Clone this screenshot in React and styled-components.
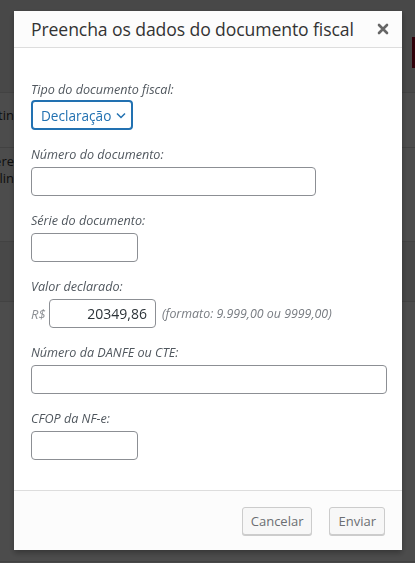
import React from 'react';
import styled, { createGlobalStyle } from 'styled-components';

const GlobalStyle = createGlobalStyle`
  html, body {
    margin: 0;
    padding: 0;
    width: 415px;
    height: 563px;
    overflow: hidden;
    background: #f1f1f1;
    font-family: "Open Sans", "Liberation Sans", sans-serif;
  }
`;

// the admin page that lies under the dimmed backdrop
const Page = styled.div`
  width: 415px;
  height: 563px;
  background: #f1f1f1;
  display: flex;
  flex-direction: column;
`;

const TopBar = styled.div`
  height: 93px;
  display: flex;
  justify-content: flex-end;
  align-items: flex-start;
  padding-top: 37px;
  box-sizing: border-box;
  border-bottom: 1px solid #dcdcdc;
`;

const RedButton = styled.div`
  width: 3px;
  height: 31px;
  background: #a0001e;
`;

const PageRow = styled.div`
  height: ${p => p.$h}px;
  background: ${p => (p.$white ? '#fff' : '#f1f1f1')};
  border-bottom: 1px solid #dcdcdc;
  box-sizing: border-box;
  padding-top: ${p => p.$pad || 12}px;
`;

// only the sliver left of the dialog shows, so the cell is clipped
const PageCell = styled.div`
  width: 14px;
  overflow: hidden;
  display: flex;
  flex-direction: column;
  align-items: flex-end;
  font-size: 13px;
  line-height: 17px;
  color: #333;
  white-space: nowrap;
`;

const Backdrop = styled.div`
  position: fixed;
  inset: 0;
  background: rgba(0, 0, 0, 0.7);
`;

const Modal = styled.div`
  position: fixed;
  top: 11px;
  left: 14px;
  width: 388px;
  height: 539px;
  background: #fff;
  display: flex;
  flex-direction: column;
  box-shadow: 0 3px 6px rgba(0, 0, 0, 0.3);
`;

const Header = styled.div`
  height: 36px;
  flex: none;
  background: #fcfcfc;
  border-bottom: 1px solid #dddddd;
  display: flex;
  align-items: center;
  justify-content: space-between;
  padding: 0 12px 0 17px;
`;

const Title = styled.h1`
  margin: 0;
  font-size: 17.6px;
  font-weight: 400;
  color: #333;
  letter-spacing: -0.1px;
`;

const Close = styled.button`
  border: 0;
  background: none;
  padding: 0;
  width: 14px;
  height: 14px;
  display: flex;
  align-items: center;
  justify-content: center;
`;

const Body = styled.div`
  flex: 1;
  padding: 32px 17px 0 17px;
  display: flex;
  flex-direction: column;
  gap: 15px;
`;

const Field = styled.div`
  display: flex;
  flex-direction: column;
  align-items: flex-start;
`;

const Label = styled.label`
  font-size: 12.6px;
  font-style: italic;
  line-height: 20px;
  color: #50575e;
  margin-bottom: ${p => (p.$tight ? 0 : 2)}px;
`;

const Input = styled.input`
  box-sizing: border-box;
  width: ${p => p.$w}px;
  height: 29px;
  border: 1px solid #8c8f94;
  border-radius: 4px;
  background: #fff;
  font-family: inherit;
  font-size: 14px;
  color: #2c3338;
  padding: 0 8px;
  text-align: ${p => p.$align || 'left'};
  outline: none;
`;

const Select = styled.div`
  box-sizing: border-box;
  width: 102px;
  height: 30px;
  border: 2px solid #2271b1;
  border-radius: 4px;
  display: flex;
  align-items: center;
  gap: 5px;
  padding: 0 0 0 8px;
  font-size: 13.6px;
  color: #2271b1;
`;

const ValueRow = styled.div`
  display: flex;
  align-items: center;
  gap: 5px;
`;

const Currency = styled.span`
  font-size: 13px;
  font-style: italic;
  color: #8c8f94;
  width: 13px;
`;

const Hint = styled.span`
  font-size: 12.4px;
  font-style: italic;
  color: #787c82;
  margin-left: 1px;
`;

const Footer = styled.div`
  height: 60px;
  flex: none;
  box-sizing: border-box;
  background: #fcfcfc;
  border-top: 1px solid #dddddd;
  display: flex;
  justify-content: flex-end;
  align-items: flex-start;
  gap: 17px;
  padding: 16px 17px 0 0;
`;

const Button = styled.button`
  height: 28px;
  box-sizing: border-box;
  padding: 0 ${p => p.$pad}px;
  border: 1px solid #cccccc;
  border-radius: 3px;
  background: #f7f7f7;
  font-family: inherit;
  font-size: 13px;
  color: #6b6e72;
  box-shadow: 0 1px 0 #cccccc;
`;

const Fields = [
  { label: 'Número do documento:', w: 285 },
  { label: 'Série do documento:', w: 107 },
];

export default function App() {
  return (
    <>
      <GlobalStyle />
      <Page>
        <TopBar>
          <RedButton />
        </TopBar>
        <PageRow $h={55} $white $pad={14}>
          <PageCell>Destin</PageCell>
        </PageRow>
        <PageRow $h={94} $white $pad={5}>
          <PageCell>
            <span>Endere</span>
            <span>Olin</span>
          </PageCell>
        </PageRow>
        <PageRow $h={60} />
        <PageRow $h={260} $white />
      </Page>
      <Backdrop />
      <Modal>
        <Header>
          <Title>Preencha os dados do documento fiscal</Title>
          <Close aria-label="Fechar">
            <svg width="12" height="12" viewBox="0 0 12 12">
              <path d="M2 2 L10 10 M10 2 L2 10" stroke="#666" strokeWidth="2.6" strokeLinecap="round" />
            </svg>
          </Close>
        </Header>
        <Body>
          <Field>
            <Label $tight>Tipo do documento fiscal:</Label>
            <Select>
              Declaração
              <svg width="10" height="7" viewBox="0 0 10 7">
                <path d="M1 1.5 L5 5.5 L9 1.5" fill="none" stroke="#2271b1" strokeWidth="1.5" />
              </svg>
            </Select>
          </Field>
          {Fields.map(f => (
            <Field key={f.label}>
              <Label>{f.label}</Label>
              <Input $w={f.w} />
            </Field>
          ))}
          <Field>
            <Label>Valor declarado:</Label>
            <ValueRow>
              <Currency>R$</Currency>
              <Input $w={107} $align="right" defaultValue="20349,86" />
              <Hint>(formato: 9.999,00 ou 9999,00)</Hint>
            </ValueRow>
          </Field>
          <Field>
            <Label>Número da DANFE ou CTE:</Label>
            <Input $w={356} />
          </Field>
          <Field>
            <Label>CFOP da NF-e:</Label>
            <Input $w={107} />
          </Field>
        </Body>
        <Footer>
          <Button $pad={8}>Cancelar</Button>
          <Button $pad={8}>Enviar</Button>
        </Footer>
      </Modal>
    </>
  );
}
